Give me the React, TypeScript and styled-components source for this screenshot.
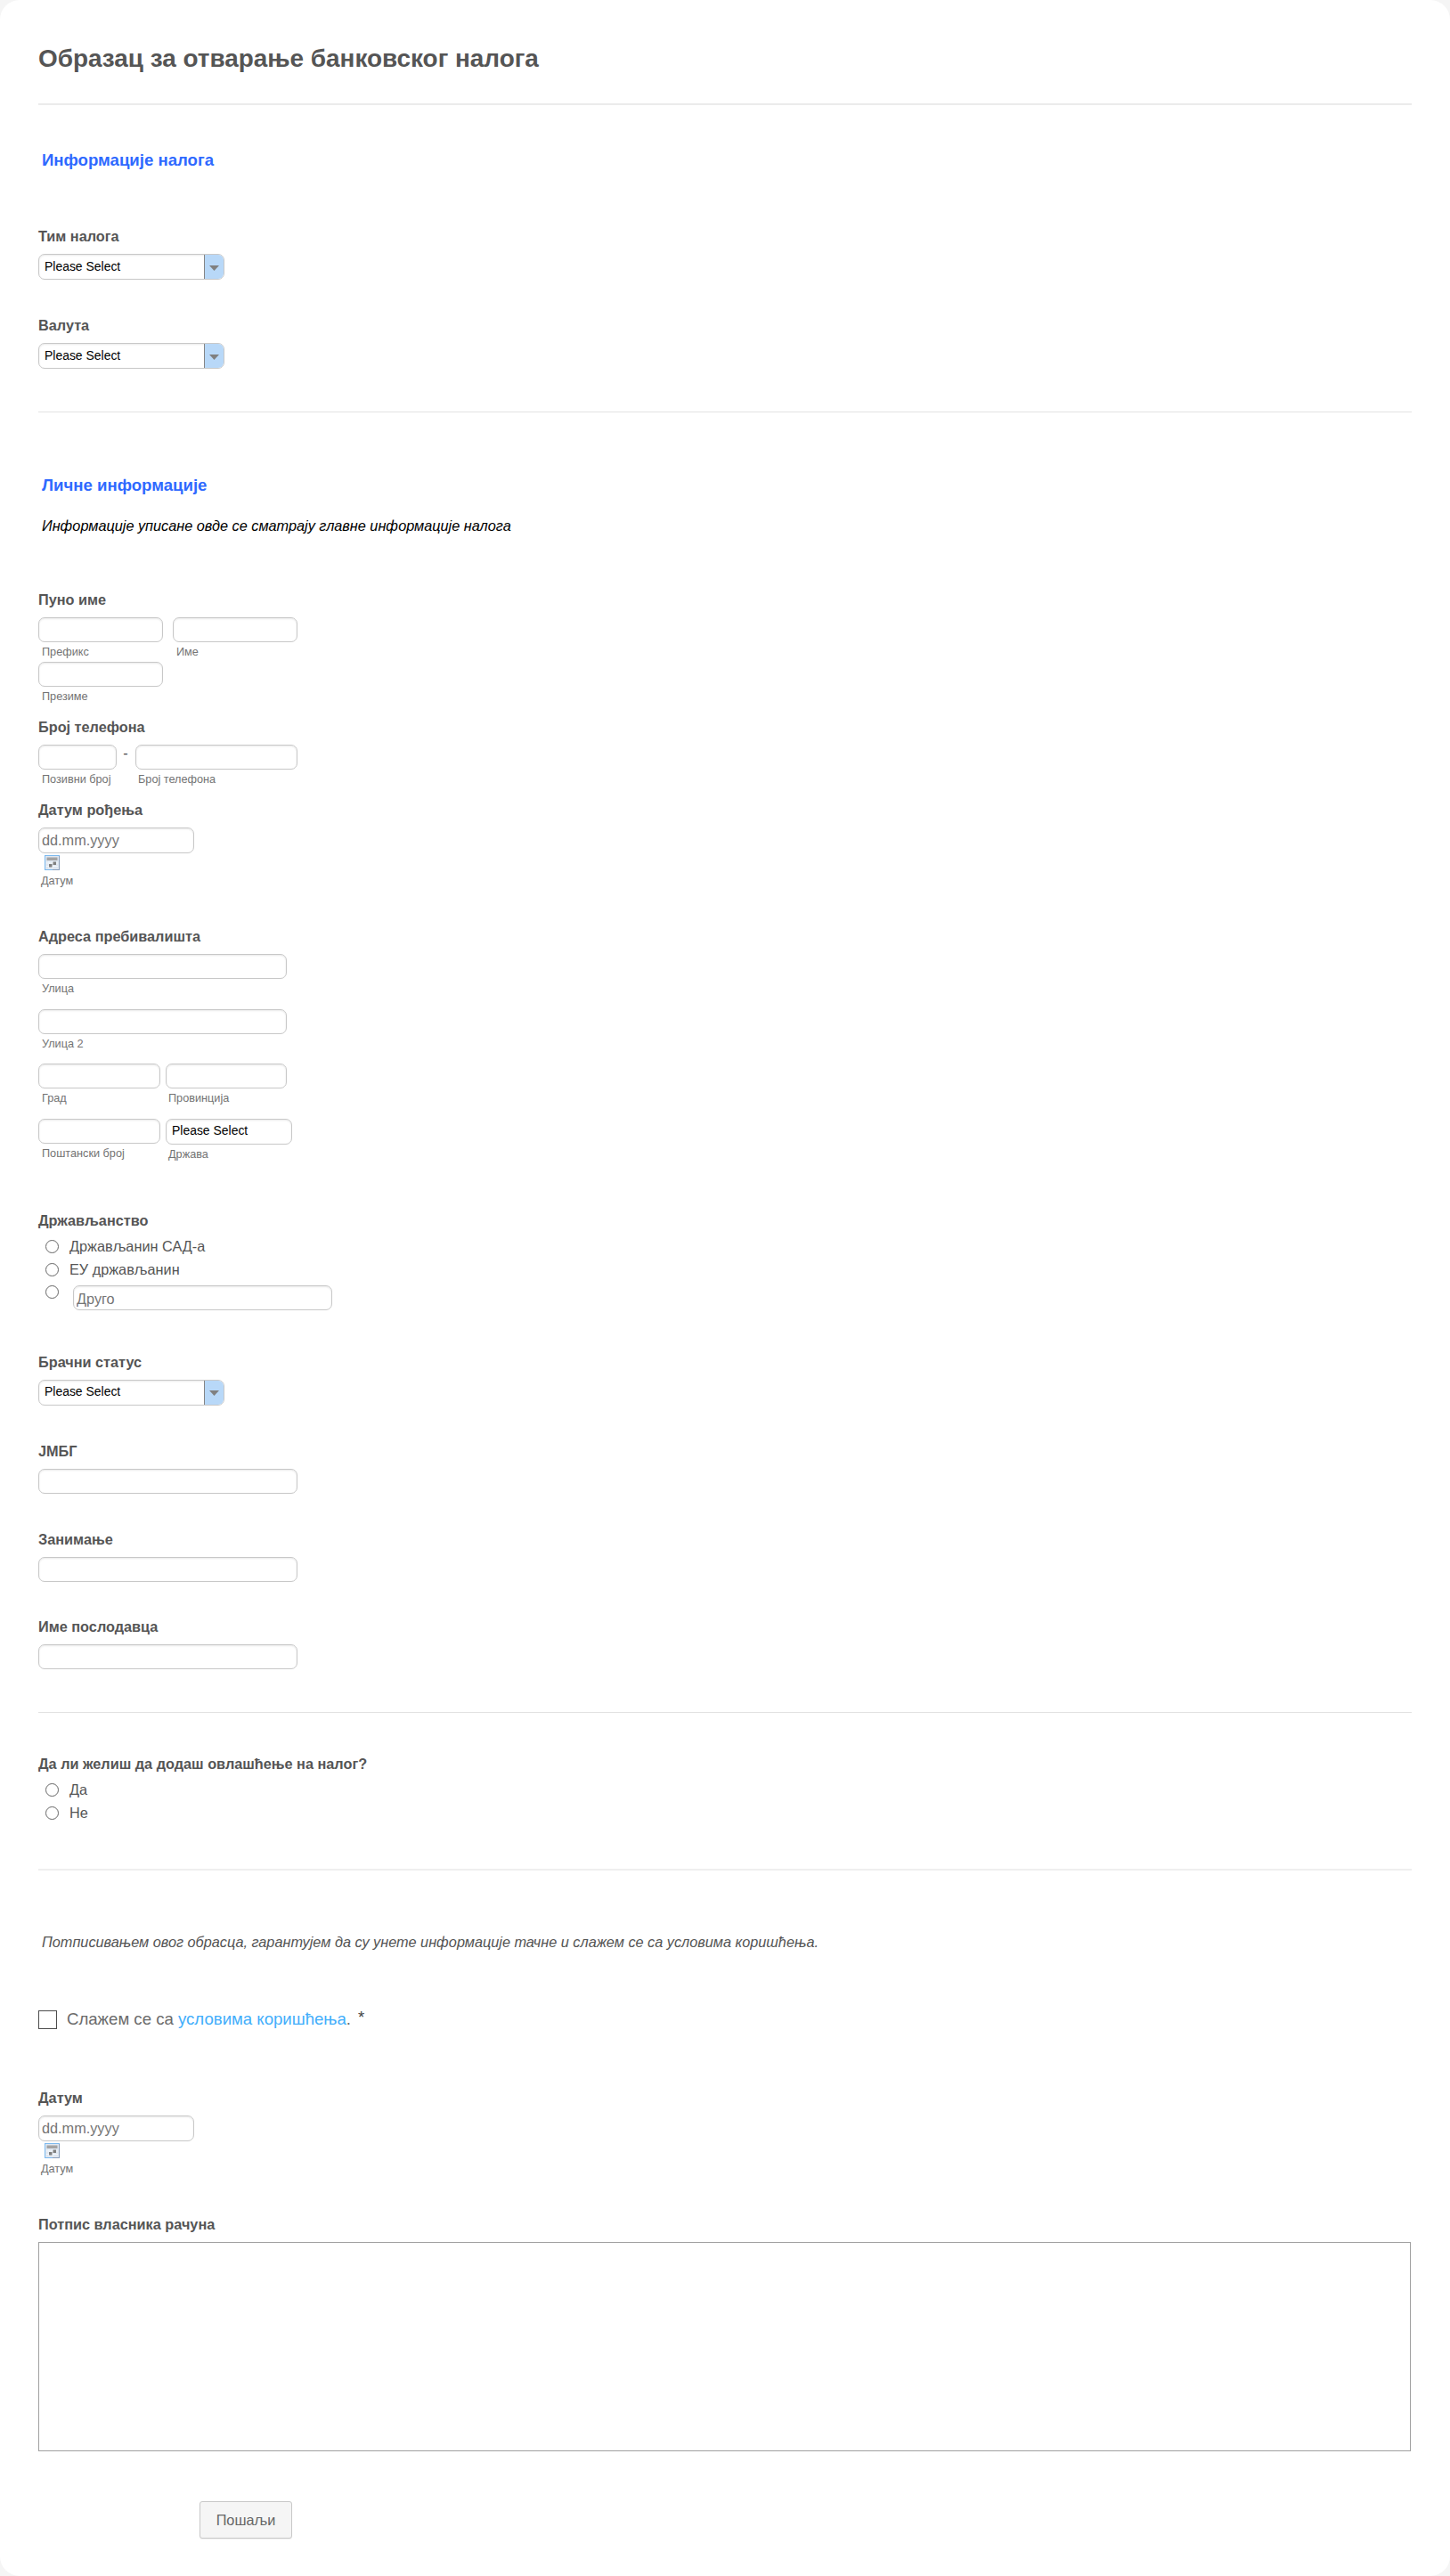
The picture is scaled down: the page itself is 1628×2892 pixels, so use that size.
import React from 'react';
import styled, { createGlobalStyle, css } from 'styled-components';

const Global = createGlobalStyle`
  *, *::before, *::after { box-sizing: border-box; }
  html, body { margin: 0; background: #f5f5f5; }
  body, input, select, button { font-family: "Liberation Sans", Arial, sans-serif; }
`;

const Card = styled.form`
  display: flex;
  flex-direction: column;
  width: 1628px;
  height: 2892px;
  padding: 48px 43px 0;
  border-radius: 22px;
  background: #fff;
  color: #555;
  font-size: 16.28px;
  line-height: 18px;
`;

const Header = styled.header`
  padding-bottom: 32px;
  border-bottom: 2px solid #ebebeb;
`;

const Title = styled.h1`
  margin: 0;
  font-size: 27.9px;
  line-height: 36px;
`;

const Divider = styled.hr<{ $gap: number; $soft?: boolean }>`
  width: 100%;
  height: ${p => (p.$soft ? 2 : 1)}px;
  margin: ${p => p.$gap}px 0 0;
  border: 0;
  background: ${p => (p.$soft ? '#efefef' : '#e2e2e2')};
`;

const Heading = styled.h2<{ $gap: number }>`
  margin: ${p => p.$gap}px 0 0 4px;
  color: #2e69ff;
  font-size: 18.6px;
  line-height: 24px;
`;

const Note = styled.p<{ $gap: number; $dark?: boolean }>`
  margin: ${p => p.$gap}px 0 0 4px;
  color: ${p => (p.$dark ? '#000' : '#555')};
  font-style: italic;
`;

const FieldBox = styled.section<{ $gap: number }>`
  display: flex;
  flex-direction: column;
  align-items: flex-start;
  margin-top: ${p => p.$gap}px;
`;

const Label = styled.div`
  margin-bottom: 11px;
  font-weight: 700;
`;

const Row = styled.div<{ $space?: number }>`
  display: flex;
  align-items: flex-start;
  gap: ${p => p.$space ?? 0}px;
`;

const Stack = styled.div<{ $space?: number }>`
  display: flex;
  flex-direction: column;
  gap: ${p => p.$space ?? 0}px;
`;

const control = css`
  border: 1px solid #c8c8c8;
  border-radius: 7px;
  background: #fff;
  box-shadow: inset 0 1px 2px rgba(0, 0, 0, 0.09);
`;

const Input = styled.input<{ $w: number; $h?: number; $drop?: number }>`
  ${control}
  display: block;
  width: ${p => p.$w}px;
  height: ${p => p.$h ?? 28}px;
  padding: ${p => p.$drop ?? 0}px 3px 0;
  color: #555;
  font-size: 16.28px;
  outline: 0;
  &::placeholder { color: #757575; opacity: 1; }
`;

const SubLabel = styled.span<{ $inset?: number }>`
  display: block;
  padding-left: ${p => p.$inset ?? 4}px;
  color: #737373;
  font-size: 12.7px;
  line-height: 22px;
`;

const SelectBox = styled.div<{ $w: number }>`
  ${control}
  display: flex;
  width: ${p => p.$w}px;
  height: 29px;
  overflow: hidden;
`;

const NativeSelect = styled.select`
  flex: 1;
  min-width: 0;
  padding: 0 0 2px 6px;
  border: 0;
  background: transparent;
  color: #000;
  font-size: 13.95px;
  appearance: none;
  outline: 0;
`;

const ArrowCell = styled.span`
  display: flex;
  align-items: center;
  justify-content: center;
  width: 22px;
  padding-top: 2px;
  border-left: 1px solid #858585;
  background: #b8d8f8;
`;

const Dash = styled.span`
  width: 21px;
  padding-right: 1px;
  color: #444;
  text-align: center;
`;

const CalendarRow = styled.div`
  height: 20px;
  padding: 2px 0 0 7px;
`;

const Options = styled(Stack)`
  padding-left: 8px;
`;

const Option = styled.label<{ $space?: number }>`
  display: flex;
  align-items: flex-start;
  gap: ${p => p.$space ?? 12}px;
  height: 18px;
`;

const Radio = styled.input.attrs({ type: 'radio' })`
  flex: none;
  width: 15px;
  height: 15px;
  margin: 2px 0 0;
  border: 1px solid #666;
  border-radius: 50%;
  background: #fff;
  appearance: none;
`;

const OtherWrap = styled.span`
  padding-top: 1.6px;
`;

const Terms = styled.label`
  display: flex;
  align-items: flex-start;
  height: 21px;
  margin-top: 68px;
  color: #6b6b6b;
  font-size: 18.6px;
  line-height: 19px;
`;

const Check = styled.input.attrs({ type: 'checkbox' })`
  flex: none;
  width: 21px;
  height: 21px;
  margin: 0 11px 0 0;
  border: 1px solid #4c4c4c;
  background: #fff;
  appearance: none;
`;

const TermsLink = styled.a`
  color: #42aefb;
  text-decoration: none;
`;

const Required = styled.span`
  margin-left: 8px;
  color: #444;
  font-size: 18.6px;
  line-height: 16px;
`;

const Signature = styled.div`
  width: 1541px;
  height: 235px;
  border: 1px solid #a0a0a0;
`;

const Submit = styled.button`
  width: 104px;
  height: 42px;
  margin: 56px 0 0 181px;
  padding: 1px 0 0;
  border: 1px solid #c8c8c8;
  border-radius: 3px;
  background: #f5f5f5;
  box-shadow: 0 1px 1px rgba(0, 0, 0, 0.06);
  color: #666;
  font-size: 16.28px;
`;

function Field({ label, gap = 42, children }: { label: string; gap?: number; children: React.ReactNode }) {
  return (
    <FieldBox $gap={gap}>
      <Label>{label}</Label>
      {children}
    </FieldBox>
  );
}

function Captioned({ w, caption, inset }: { w: number; caption: string; inset?: number }) {
  return (
    <Stack>
      <Input $w={w} />
      <SubLabel $inset={inset}>{caption}</SubLabel>
    </Stack>
  );
}

function Select({ w = 209, arrow = true }: { w?: number; arrow?: boolean }) {
  return (
    <SelectBox $w={w}>
      <NativeSelect>
        <option>Please Select</option>
      </NativeSelect>
      {arrow && (
        <ArrowCell>
          <svg width="11" height="6" viewBox="0 0 11 6">
            <path d="M0 0h11L5.5 6z" fill="#808080" />
          </svg>
        </ArrowCell>
      )}
    </SelectBox>
  );
}

function DateField({ label, gap }: { label: string; gap: number }) {
  return (
    <Field label={label} gap={gap}>
      <Input $w={175} $h={29} placeholder="dd.mm.yyyy" />
      <CalendarRow>
        <svg width="17" height="17" viewBox="0 0 17 17" display="block">
          <rect x="0.5" y="0.5" width="16" height="16" fill="#dfe7f1" stroke="#7cb9ee" />
          <path d="M16.5 1v15.5H9" fill="none" stroke="#8a9db8" />
          <rect x="2.500" y="2.5" width="12" height="3.5" fill="#a4a4a4" />
          <path d="M2 9h13M2 12.500h13M5 7v8M9 7v8" stroke="#f3f6fa" />
          <rect x="9.500" y="7.500" width="3.500" height="3.500" fill="#808080" />
          <rect x="5" y="10" width="3.500" height="3.500" fill="#808080" />
        </svg>
      </CalendarRow>
      <SubLabel $inset={3}>Датум</SubLabel>
    </Field>
  );
}

export default function App() {
  return (
    <>
      <Global />
      <Card>
        <Header>
          <Title>Образац за отварање банковског налога</Title>
        </Header>

        <Heading $gap={50}>Информације налога</Heading>
        <Field label="Тим налога" gap={64}><Select /></Field>
        <Field label="Валута"><Select /></Field>

        <Divider $gap={48} />

        <Heading $gap={70}>Личне информације</Heading>
        <Note $gap={24} $dark>Информације уписане овде се сматрају главне информације налога</Note>

        <Field label="Пуно име" gap={65}>
          <Row $space={11}>
            <Captioned w={140} caption="Префикс" />
            <Captioned w={140} caption="Име" />
          </Row>
          <Captioned w={140} caption="Презиме" />
        </Field>

        <Field label="Број телефона" gap={14}>
          <Row>
            <Captioned w={88} caption="Позивни број" />
            <Dash>-</Dash>
            <Captioned w={182} caption="Број телефона" inset={3} />
          </Row>
        </Field>

        <DateField label="Датум рођења" gap={14} />

        <Field label="Адреса пребивалишта">
          <Stack $space={11.6}>
            <Captioned w={279} caption="Улица" />
            <Captioned w={279} caption="Улица 2" />
            <Row $space={6}>
              <Captioned w={137} caption="Град" />
              <Captioned w={136} caption="Провинција" inset={3} />
            </Row>
            <Row $space={6}>
              <Captioned w={137} caption="Поштански број" />
              <Stack>
                <Select w={142} arrow={false} />
                <SubLabel $inset={3}>Држава</SubLabel>
              </Stack>
            </Row>
          </Stack>
        </Field>

        <Field label="Држављанство" gap={54.2}>
          <Options $space={7.7}>
            <Option><Radio name="citizen" />Држављанин САД-а</Option>
            <Option><Radio name="citizen" />ЕУ држављанин</Option>
            <Option $space={16}>
              <Radio name="citizen" />
              <OtherWrap><Input $w={291} $drop={3} placeholder="Друго" /></OtherWrap>
            </Option>
          </Options>
        </Field>

        <Field label="Брачни статус" gap={60.6}><Select /></Field>
        <Field label="ЈМБГ"><Input $w={291} /></Field>
        <Field label="Занимање" gap={41.6}><Input $w={291} /></Field>
        <Field label="Име послодавца" gap={41.4}><Input $w={291} /></Field>

        <Divider $gap={48} />

        <Field label="Да ли желиш да додаш овлашћење на налог?" gap={48}>
          <Options $space={7.7}>
            <Option><Radio name="authorize" />Да</Option>
            <Option><Radio name="authorize" />Не</Option>
          </Options>
        </Field>

        <Divider $gap={54.3} $soft />

        <Note $gap={71}>
          Потписивањем овог обрасца, гарантујем да су унете информације тачне и слажем се са условима коришћења.
        </Note>

        <Terms>
          <Check />
          <span>Слажем се са <TermsLink>условима коришћења</TermsLink>.</span>
          <Required>*</Required>
        </Terms>

        <DateField label="Датум" gap={68} />

        <Field label="Потпис власника рачуна"><Signature /></Field>

        <Submit type="button">Пошаљи</Submit>
      </Card>
    </>
  );
}
